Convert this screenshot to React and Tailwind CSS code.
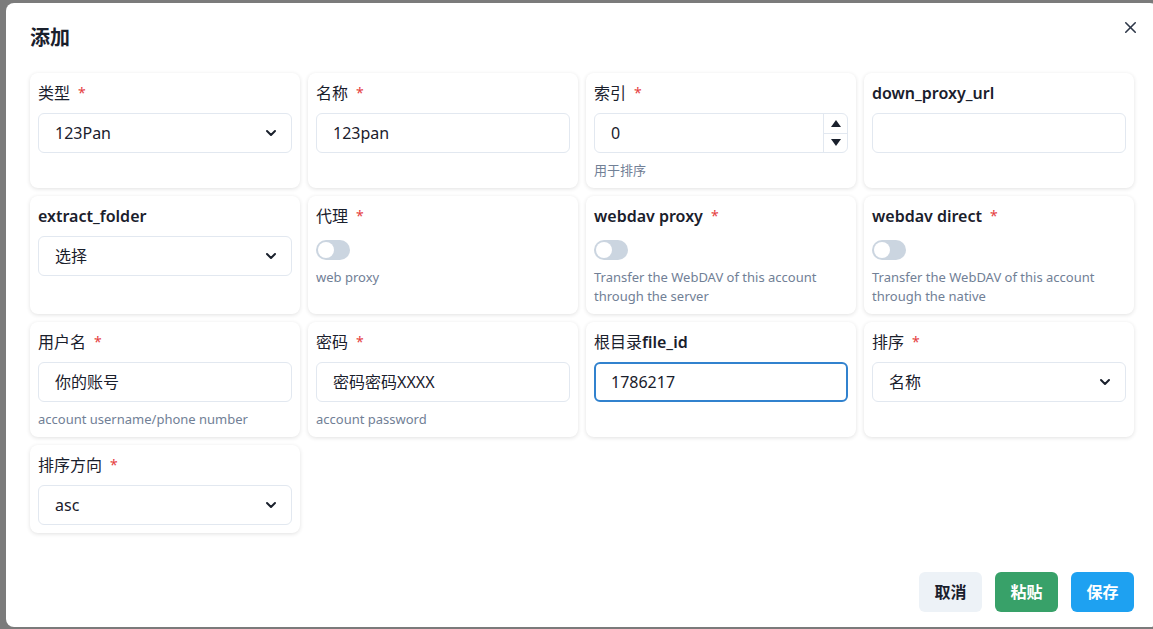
import { ChevronDown, X } from 'lucide-react';

const font = { fontFamily: '"Noto Sans", "Noto Sans CJK SC", sans-serif' };

const Label = ({ children, required }) => (
  <div className="flex items-center h-6 text-base text-[#1a202c] leading-6">
    <span>{children}</span>
    {required && <span className="ml-2 text-[#e53e3e] text-sm">*</span>}
  </div>
);

const Cn = ({ children }) => <span className="font-normal">{children}</span>;

const Help = ({ children }) => (
  <p className="mt-2 text-[13px] leading-[19px] text-[#718096]">{children}</p>
);

const Card = ({ children }) => (
  <div className="bg-white rounded-lg px-2 pt-2 pb-2 shadow-[0_1px_4px_rgba(0,0,0,0.12)]">
    {children}
  </div>
);

const TextInput = ({ value, focused }) => (
  <div
    className={
      focused
        ? 'mt-2 h-10 rounded-md border-2 border-[#3182ce] pl-[15px] flex items-center text-base text-[#1a202c]'
        : 'mt-2 h-10 rounded-md border border-[#e2e8f0] pl-4 flex items-center text-base text-[#1a202c]'
    }
  >
    {value}
  </div>
);

const Select = ({ value }) => (
  <div className="mt-2 h-10 rounded-md border border-[#e2e8f0] pl-4 pr-3 flex items-center justify-between text-base text-[#1a202c]">
    <span>{value}</span>
    <ChevronDown className="w-4 h-4 text-[#1a202c]" strokeWidth={3} />
  </div>
);

const NumberInput = ({ value }) => (
  <div className="mt-2 h-10 rounded-md border border-[#e2e8f0] flex text-base text-[#1a202c]">
    <div className="flex-1 pl-4 flex items-center">{value}</div>
    <div className="w-6 border-l border-[#e2e8f0] flex flex-col">
      <div className="flex-1 flex items-center justify-center border-b border-[#e2e8f0]">
        <svg width="10" height="7" viewBox="0 0 10 7"><path d="M0 7 L5 0 L10 7 Z" fill="#1a202c" /></svg>
      </div>
      <div className="flex-1 flex items-center justify-center">
        <svg width="10" height="7" viewBox="0 0 10 7"><path d="M0 0 L5 7 L10 0 Z" fill="#1a202c" /></svg>
      </div>
    </div>
  </div>
);

const Switch = () => (
  <div className="mt-3 w-[34px] h-5 rounded-full bg-[#cbd5e0] p-[2px]">
    <div className="w-4 h-4 rounded-full bg-white" />
  </div>
);

export default function App() {
  return (
    <div className="w-full h-[629px] overflow-hidden bg-[#7b7b7b] relative" style={font}>
      <div className="absolute left-[6px] top-[3px] w-[1152px] h-[624px] bg-white rounded-lg flex flex-col">
        <div className="px-6 pt-5 pb-4 flex items-center justify-between">
          <h2 className="text-xl font-bold text-[#1a202c] leading-[30px]">添加</h2>
        </div>
        <button className="absolute top-[12px] right-[16px] w-6 h-6 flex items-center justify-center text-[#2d3748]">
          <X className="w-[19px] h-[19px]" strokeWidth={2} />
        </button>
        <div className="px-6 pt-1 flex-1">
          <div className="grid grid-cols-4 gap-x-2 gap-y-2">
            <Card>
              <Label required><Cn>类型</Cn></Label>
              <Select value="123Pan" />
            </Card>
            <Card>
              <Label required><Cn>名称</Cn></Label>
              <TextInput value="123pan" />
            </Card>
            <Card>
              <Label required><Cn>索引</Cn></Label>
              <NumberInput value="0" />
              <Help>用于排序</Help>
            </Card>
            <Card>
              <Label><span className="font-semibold">down_proxy_url</span></Label>
              <TextInput value="" />
            </Card>

            <Card>
              <Label><span className="font-semibold">extract_folder</span></Label>
              <Select value="选择" />
            </Card>
            <Card>
              <Label required><Cn>代理</Cn></Label>
              <Switch />
              <Help>web proxy</Help>
            </Card>
            <Card>
              <Label required><span className="font-semibold">webdav proxy</span></Label>
              <Switch />
              <Help>Transfer the WebDAV of this account through the server</Help>
            </Card>
            <Card>
              <Label required><span className="font-semibold">webdav direct</span></Label>
              <Switch />
              <Help>Transfer the WebDAV of this account through the native</Help>
            </Card>

            <Card>
              <Label required><Cn>用户名</Cn></Label>
              <TextInput value="你的账号" />
              <Help>account username/phone number</Help>
            </Card>
            <Card>
              <Label required><Cn>密码</Cn></Label>
              <TextInput value="密码密码XXXX" />
              <Help>account password</Help>
            </Card>
            <Card>
              <Label><Cn>根目录</Cn><span className="font-semibold">file_id</span></Label>
              <TextInput value="1786217" focused />
            </Card>
            <Card>
              <Label required><Cn>排序</Cn></Label>
              <Select value="名称" />
            </Card>

            <Card>
              <Label required><Cn>排序方向</Cn></Label>
              <Select value="asc" />
            </Card>
          </div>
        </div>
        <div className="px-6 pb-[15px] flex justify-end gap-[13px]">
          <button className="h-10 w-[63px] rounded-md bg-[#edf2f7] text-[#1a202c] font-bold text-base">取消</button>
          <button className="h-10 w-[63px] rounded-md bg-[#38a169] text-white font-bold text-base">粘贴</button>
          <button className="h-10 w-[63px] rounded-md bg-[#1ea1f1] text-white font-bold text-base">保存</button>
        </div>
      </div>
    </div>
  );
}
